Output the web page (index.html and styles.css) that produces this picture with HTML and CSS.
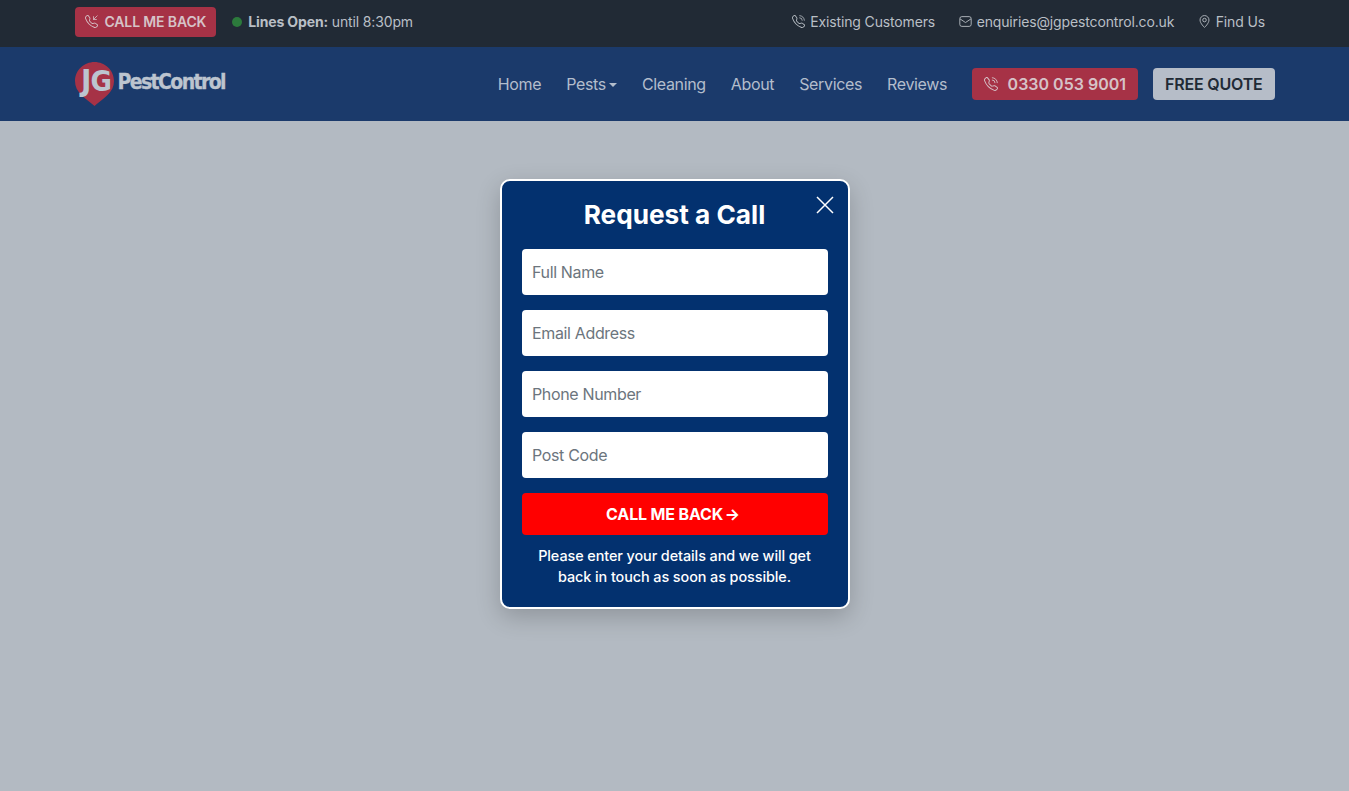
FILE: index.html
```html
<!DOCTYPE html>
<html lang="en">
<head>
  <meta charset="UTF-8">
  <meta name="viewport" content="width=device-width, initial-scale=1.0">
  <title>JG Pest Control - Request a Call</title>
  <link rel="stylesheet" href="styles.css">
</head>
<body>

  <svg class="icon-defs" aria-hidden="true">
    <symbol id="phone-shape" viewBox="0 0 16 16">
      <path fill="currentColor" d="M3.654 1.328a.678.678 0 0 0-1.015-.063L1.605 2.3c-.483.484-.661 1.169-.45 1.77a17.568 17.568 0 0 0 4.168 6.608 17.569 17.569 0 0 0 6.608 4.168c.601.211 1.286.033 1.77-.45l1.034-1.034a.678.678 0 0 0-.063-1.015l-2.307-1.794a.678.678 0 0 0-.58-.122l-2.19.547a1.745 1.745 0 0 1-1.657-.459L5.482 8.062a1.745 1.745 0 0 1-.46-1.657l.548-2.19a.678.678 0 0 0-.122-.58L3.654 1.328zM1.884.511a1.745 1.745 0 0 1 2.612.163L6.29 2.98c.329.423.445.974.315 1.494l-.547 2.19a.678.678 0 0 0 .178.643l2.457 2.457a.678.678 0 0 0 .644.178l2.189-.547a1.745 1.745 0 0 1 1.494.315l2.306 1.794c.829.645.905 1.87.163 2.611l-1.034 1.034c-.74.74-1.846 1.065-2.877.702a18.634 18.634 0 0 1-7.01-4.42 18.634 18.634 0 0 1-4.42-7.009c-.362-1.03-.037-2.137.703-2.877L1.885.511z"/>
    </symbol>
    <symbol id="phone-waves" viewBox="0 0 16 16">
      <use href="#phone-shape"/>
      <path fill="none" stroke="currentColor" stroke-width="1" stroke-linecap="round" d="M9.5.8a5.7 5.7 0 0 1 5.7 5.7M9.5 3.4a3.1 3.1 0 0 1 3.1 3.1"/>
    </symbol>
    <symbol id="phone-inbound" viewBox="0 0 16 16">
      <use href="#phone-shape"/>
      <path fill="none" stroke="currentColor" stroke-width="1" stroke-linecap="round" stroke-linejoin="round" d="M15 1l-4.500 4.500M10.500 2v3.500H14"/>
    </symbol>
  </svg>

  <div class="topbar">
    <div class="container topbar-inner">
      <div class="topbar-left">
        <a href="#" class="btn-call"><svg class="icon"><use href="#phone-inbound"/></svg>CALL ME BACK</a>
        <span class="lines-open"><span class="status-dot"></span><strong>Lines Open:</strong> until 8:30pm</span>
      </div>
      <ul class="topbar-links">
        <li><a href="#"><svg class="icon"><use href="#phone-waves"/></svg>Existing Customers</a></li>
        <li><a href="#"><svg class="icon" viewBox="0 0 16 16"><rect x="1" y="2" width="14" height="12" rx="2.500" fill="none" stroke="currentColor" stroke-width="1.100"/><path d="M1.300 4.800L8 9.300l6.700-4.500" fill="none" stroke="currentColor" stroke-width="1.100"/></svg>enquiries@jgpestcontrol.co.uk</a></li>
        <li><a href="#"><svg class="icon" viewBox="0 0 16 16"><path d="M8 15.300S2.500 10.300 2.500 6.200a5.500 5.500 0 0 1 11 0c0 4.100-5.500 9.100-5.500 9.100z" fill="none" stroke="currentColor" stroke-width="1.100"/><circle cx="8" cy="6.200" r="2.200" fill="none" stroke="currentColor" stroke-width="1.100"/></svg>Find Us</a></li>
      </ul>
    </div>
  </div>

  <nav class="navbar">
    <div class="container navbar-inner">
      <a href="#" class="logo">
        <svg class="logo-mark" viewBox="0 0 39 44">
          <path d="M19.500 0C30 0 39 8.300 39 19c0 11.500-10 17-19.500 25C10 36 0 30.500 0 19 0 8.300 9 0 19.500 0z" fill="#a63246"/>
          <text x="6" y="29" class="logo-initials">J<tspan class="logo-g">G</tspan></text>
        </svg>
        <span class="logo-text">PestControl</span>
      </a>
      <ul class="nav-links">
        <li><a href="#">Home</a></li>
        <li><a href="#" class="caret">Pests</a></li>
        <li><a href="#">Cleaning</a></li>
        <li><a href="#">About</a></li>
        <li><a href="#">Services</a></li>
        <li><a href="#">Reviews</a></li>
      </ul>
      <a href="#" class="btn-phone"><svg class="icon"><use href="#phone-waves"/></svg>0330 053 9001</a>
      <a href="#" class="btn-quote">FREE QUOTE</a>
    </div>
  </nav>

  <main class="backdrop">
    <div class="modal">
      <button class="modal-close" aria-label="Close">
        <svg viewBox="0 0 18 18"><path d="M1 1l16 16M17 1L1 17" fill="none" stroke="currentColor" stroke-width="1.500"/></svg>
      </button>
      <h2>Request a Call</h2>
      <form class="call-form">
        <input type="text" placeholder="Full Name">
        <input type="email" placeholder="Email Address">
        <input type="tel" placeholder="Phone Number">
        <input type="text" placeholder="Post Code">
        <button type="button" class="btn-submit">CALL ME BACK <span class="arrow">&rarr;</span></button>
      </form>
      <p>Please enter your details and we will get back in touch as soon as possible.</p>
    </div>
  </main>

</body>
</html>
```

FILE: styles.css
```css
/* General Reset */
* {
  margin: 0;
  padding: 0;
  box-sizing: border-box;
}

html, body {
  height: 100%;
}

body {
  font-family: 'Inter', 'Liberation Sans', sans-serif;
  background-color: #b3bac2;
  display: flex;
  flex-direction: column;
  overflow: hidden;
}

a {
  color: inherit;
  text-decoration: none;
}

ul {
  list-style: none;
}

.icon-defs {
  display: none;
}

.icon {
  width: 13px;
  height: 13px;
  flex-shrink: 0;
}

.container {
  width: 1200px;
  margin: 0 auto;
  display: flex;
  align-items: center;
}

/* Top Bar */
.topbar {
  background-color: #212a35;
  color: #b9bfc5;
  font-size: 14px;
  line-height: 20px;
  letter-spacing: -0.14px;
  height: 47px;
  flex-shrink: 0;
}

.topbar-inner {
  height: 100%;
  justify-content: space-between;
  padding: 0 9.5px 3px 0;
}

.topbar-left {
  display: flex;
  align-items: center;
  gap: 16px;
}

.btn-call {
  display: flex;
  align-items: center;
  gap: 7px;
  height: 30px;
  padding: 0 10px 1px;
  background-color: #a63246;
  color: #d6c3c8;
  border-radius: 4px;
  font-weight: 600;
}

.lines-open {
  display: flex;
  align-items: center;
  white-space: pre;
  margin-top: -1px;
}

.lines-open strong {
  font-weight: 700;
}

.status-dot {
  width: 10px;
  height: 10px;
  margin-right: 6px;
  border-radius: 50%;
  background-color: #2c7a3c;
}

.topbar-links {
  display: flex;
  gap: 23.5px;
  margin-top: -1px;
}

.topbar-links a {
  display: flex;
  align-items: center;
  gap: 5px;
}

/* Navbar */
.navbar {
  background-color: #1b3a6b;
  height: 74px;
  flex-shrink: 0;
}

.navbar-inner {
  height: 100%;
}

.logo {
  display: flex;
  align-items: center;
  gap: 4px;
  margin-top: -1px;
  margin-right: auto;
}

.logo-mark {
  width: 39px;
  height: 44px;
  overflow: visible;
}

.logo-initials {
  font-family: 'DejaVu Sans Condensed', 'Liberation Sans', sans-serif;
  font-size: 31px;
  font-weight: 700;
  letter-spacing: -1px;
  fill: #bcc4cf;
}

.logo-g {
  font-size: 29px;
}

.logo-text {
  font-family: 'DejaVu Sans Condensed', 'Liberation Sans', sans-serif;
  font-size: 21px;
  font-weight: 700;
  color: #bcc4cf;
  letter-spacing: -1.6px;
  -webkit-text-stroke: 0.3px #bcc4cf;
  margin-top: -4px;
}

.nav-links {
  display: flex;
  gap: 25px;
  margin-right: 24.5px;
  color: #b3bdcc;
  font-size: 16px;
  letter-spacing: -0.35px;
}

.caret::after {
  content: "";
  display: inline-block;
  margin-left: 3px;
  vertical-align: 3px;
  border-top: 4px solid;
  border-left: 4px solid transparent;
  border-right: 4px solid transparent;
}

.btn-phone {
  display: flex;
  align-items: center;
  gap: 10px;
  height: 32px;
  padding: 0 12px;
  margin-right: 15px;
  background-color: #a63246;
  color: #d6c3c8;
  border-radius: 4px;
  font-size: 16px;
  font-weight: 600;
}

.btn-phone .icon {
  width: 14px;
  height: 14px;
}

.btn-quote {
  display: flex;
  align-items: center;
  height: 32px;
  padding: 0 12px;
  background-color: #b6bdc8;
  color: #212a35;
  border-radius: 4px;
  font-size: 16px;
  font-weight: 600;
  letter-spacing: -0.2px;
}

/* Modal */
.backdrop {
  flex: 1;
  display: flex;
  justify-content: center;
  align-items: flex-start;
  padding-top: 58px;
}

.modal {
  position: relative;
  width: 350px;
  height: 430px;
  padding: 18px 20px 0;
  background-color: #03316f;
  color: #fff;
  border: 2px solid #fff;
  border-radius: 10px;
  box-shadow: 0 8px 24px rgba(0, 0, 0, 0.2);
  text-align: center;
}

.modal h2 {
  font-size: 26.2px;
  font-weight: 700;
  line-height: 32px;
  margin-bottom: 18px;
}

.modal-close {
  position: absolute;
  top: 15px;
  right: 14px;
  width: 18px;
  height: 18px;
  background: none;
  border: none;
  color: #fff;
}

.modal-close svg {
  display: block;
}

.call-form {
  display: flex;
  flex-direction: column;
  gap: 15px;
}

.call-form input {
  height: 46px;
  padding: 0 10.5px;
  border: none;
  border-radius: 4px;
  background-color: #fff;
  font-family: inherit;
  font-size: 16px;
  letter-spacing: -0.35px;
}

.call-form input::placeholder {
  color: #6c757d;
  opacity: 1;
}

.btn-submit {
  height: 42px;
  border: none;
  border-radius: 4px;
  background-color: #f00;
  color: #fff;
  font-family: inherit;
  font-size: 16px;
  font-weight: 700;
  letter-spacing: -0.15px;
}

.arrow {
  margin-left: -2px;
  margin-right: 3px;
}

.modal p {
  margin-top: 10px;
  font-size: 14.4px;
  font-weight: 500;
  line-height: 21px;
  letter-spacing: -0.08px;
}
```
